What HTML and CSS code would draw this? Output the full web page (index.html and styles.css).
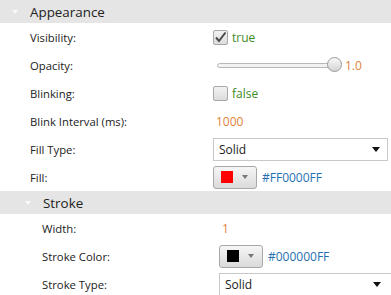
FILE: index.html
```html
<!DOCTYPE html>
<html lang="en">
<head>
    <meta charset="UTF-8">
    <meta name="viewport" content="width=device-width, initial-scale=1.0">
    <title>Properties</title>
    <link rel="stylesheet" href="styles.css">
</head>
<body>
    <div class="sheet">
        <div class="group-head"><span class="caret"></span>Appearance</div>

        <div class="prop">
            <span class="prop-label">Visibility:</span>
            <div class="prop-value">
                <span class="check">
                    <svg width="13" height="13" viewBox="0 0 13 13"><path d="M2 6.5 L5 10 L11.5 1.5" fill="none" stroke="#4a4a4a" stroke-width="2"/></svg>
                </span>
                <span class="bool">true</span>
            </div>
        </div>

        <div class="prop">
            <span class="prop-label">Opacity:</span>
            <div class="prop-value">
                <div class="slider">
                    <div class="track"></div>
                    <div class="thumb"></div>
                </div>
                <span class="num">1.0</span>
            </div>
        </div>

        <div class="prop">
            <span class="prop-label">Blinking:</span>
            <div class="prop-value">
                <span class="check"></span>
                <span class="bool">false</span>
            </div>
        </div>

        <div class="prop">
            <span class="prop-label">Blink Interval (ms):</span>
            <div class="prop-value"><span class="num pad">1000</span></div>
        </div>

        <div class="prop">
            <span class="prop-label">Fill Type:</span>
            <div class="prop-value">
                <div class="combo"><span>Solid</span><span class="combo-arrow"></span></div>
            </div>
        </div>

        <div class="prop">
            <span class="prop-label">Fill:</span>
            <div class="prop-value">
                <div class="color-btn"><span class="swatch red"></span><span class="btn-arrow"></span></div>
                <span class="hex">#FF0000FF</span>
            </div>
        </div>

        <!-- nested group -->
        <div class="group-head sub"><span class="caret"></span>Stroke</div>

        <div class="prop sub">
            <span class="prop-label">Width:</span>
            <div class="prop-value"><span class="num pad">1</span></div>
        </div>

        <div class="prop sub">
            <span class="prop-label">Stroke Color:</span>
            <div class="prop-value">
                <div class="color-btn"><span class="swatch black"></span><span class="btn-arrow"></span></div>
                <span class="hex">#000000FF</span>
            </div>
        </div>

        <div class="prop sub">
            <span class="prop-label">Stroke Type:</span>
            <div class="prop-value">
                <div class="combo wide"><span>Solid</span><span class="combo-arrow"></span></div>
            </div>
        </div>
    </div>
</body>
</html>
```

FILE: styles.css
```css
body {
    margin: 0;
    padding: 0;
    background-color: white;
    font-family: "Open Sans", "Noto Sans", sans-serif;
    font-size: 11.3px;
    color: #222;
    overflow: hidden;
}
.sheet {
    width: 391px;
}
.group-head {
    display: flex;
    align-items: center;
    height: 23px;
    padding-left: 12px;
    background-color: #e5e5e5;
    font-size: 13.4px;
    color: #222;
}
.group-head.sub {
    padding-left: 25px;
}
.caret {
    width: 0;
    height: 0;
    border-left: 3px solid transparent;
    border-right: 3px solid transparent;
    border-top: 4px solid #fafafa;
    margin-right: 12px;
}
.prop {
    display: flex;
    align-items: center;
    height: 28px;
    padding-left: 30px;
}
.prop.sub {
    padding-left: 42px;
}
.prop-label {
    width: 183px;
    flex-shrink: 0;
}
.prop.sub .prop-label {
    width: 177px;
}
.prop-value {
    display: flex;
    align-items: center;
}
.check {
    box-sizing: border-box;
    width: 15px;
    height: 15px;
    border: 1px solid #a8a8a8;
    border-radius: 2px;
    background: linear-gradient(#f2f2f2, #dcdcdc);
    display: flex;
    align-items: center;
    justify-content: center;
    margin-right: 4px;
}
.bool {
    color: #3d8c1e;
    font-size: 12px;
}
.num {
    color: #e0823c;
    font-size: 12px;
}
.num.pad {
    padding-left: 3px;
}
.slider {
    position: relative;
    width: 129px;
    height: 16px;
    margin-right: 3px;
}
.track {
    position: absolute;
    left: 4px;
    right: 6px;
    top: 6px;
    height: 3px;
    border: 1px solid #b8b8b8;
    border-radius: 3px;
    background-color: #f2f2f2;
}
.thumb {
    position: absolute;
    right: 0;
    top: 0;
    box-sizing: border-box;
    width: 15px;
    height: 15px;
    border: 1px solid #9a9a9a;
    border-radius: 50%;
    background: linear-gradient(#f8f8f8, #d4d4d4);
}
.combo {
    box-sizing: border-box;
    width: 175px;
    height: 23px;
    border: 1px solid #c8c8c8;
    background-color: white;
    display: flex;
    align-items: center;
    justify-content: space-between;
    padding: 0 7px 0 5px;
    font-size: 12px;
}
.combo.wide {
    width: 174px;
    padding-right: 11px;
}
.combo-arrow {
    width: 0;
    height: 0;
    border-left: 4px solid transparent;
    border-right: 4px solid transparent;
    border-top: 5px solid #111;
}
.color-btn {
    box-sizing: border-box;
    width: 44px;
    height: 23px;
    border: 1px solid #a8a8a8;
    border-radius: 3px;
    background: linear-gradient(#f6f6f6, #dadada);
    display: flex;
    align-items: center;
    padding-left: 7px;
}
.swatch {
    width: 12px;
    height: 12px;
    margin-right: 9px;
}
.swatch.red {
    background-color: #ff0000;
}
.swatch.black {
    background-color: #000;
}
.btn-arrow {
    width: 0;
    height: 0;
    border-left: 3px solid transparent;
    border-right: 3px solid transparent;
    border-top: 4px solid #777;
}
.hex {
    color: #1f6fb2;
    font-size: 12px;
    margin-left: 5px;
}
```
